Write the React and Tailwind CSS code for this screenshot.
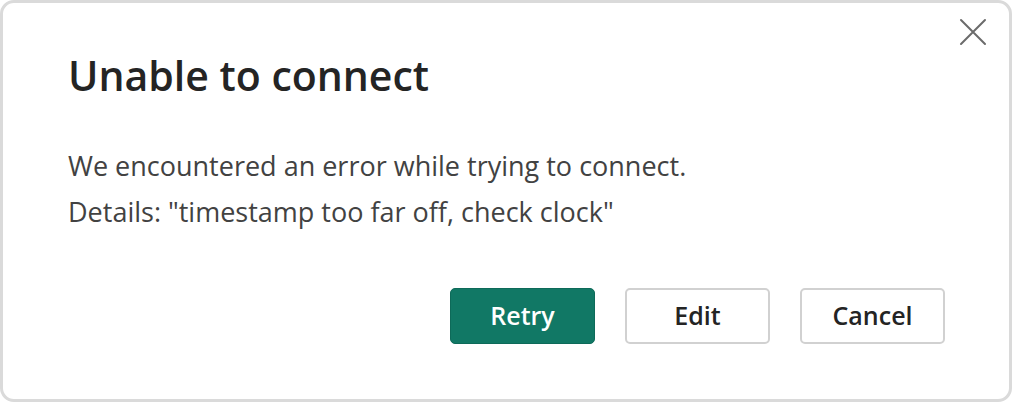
function CloseIcon() {
    return (
        <svg width="28" height="28" viewBox="0 0 28 28" fill="none" stroke="#6b6b6b" strokeWidth="2" strokeLinecap="round">
            <path d="M2 2 L26 26 M26 2 L2 26" />
        </svg>
    );
}

function ActionButton({ label, primary = false }) {
    const base = "w-[145px] h-[56px] rounded-[5px] text-[25px] font-semibold flex items-center justify-center";
    if (primary) {
        return <button className={`${base} bg-[#117865] text-white border border-[#0e6a59]`}>{label}</button>;
    }
    return <button className={`${base} bg-white text-[#242424] border-2 border-[#d1d1d1]`}>{label}</button>;
}

export default function App() {
    return (
        <div className="w-[1012px] h-[402px] bg-white" style={{ fontFamily: '"Open Sans", "Noto Sans", sans-serif' }}>
            <div className="relative w-full h-full border-[3px] border-[#dadada] rounded-[14px] bg-white pl-[65px] pr-[64px] pt-[48px]">
                <button className="absolute right-[22px] top-[15px]">
                    <CloseIcon />
                </button>
                <h1 className="text-[41px] font-semibold text-[#242424] leading-[48px]">Unable to connect</h1>
                <div className="mt-[44px] text-[27px] text-[#424242] leading-[46px]">
                    <p>We encountered an error while trying to connect.</p>
                    <p>Details: "timestamp too far off, check clock"</p>
                </div>
                <div className="flex justify-end gap-[30px] mt-[53px]">
                    <ActionButton label="Retry" primary />
                    <ActionButton label="Edit" />
                    <ActionButton label="Cancel" />
                </div>
            </div>
        </div>
    );
}
